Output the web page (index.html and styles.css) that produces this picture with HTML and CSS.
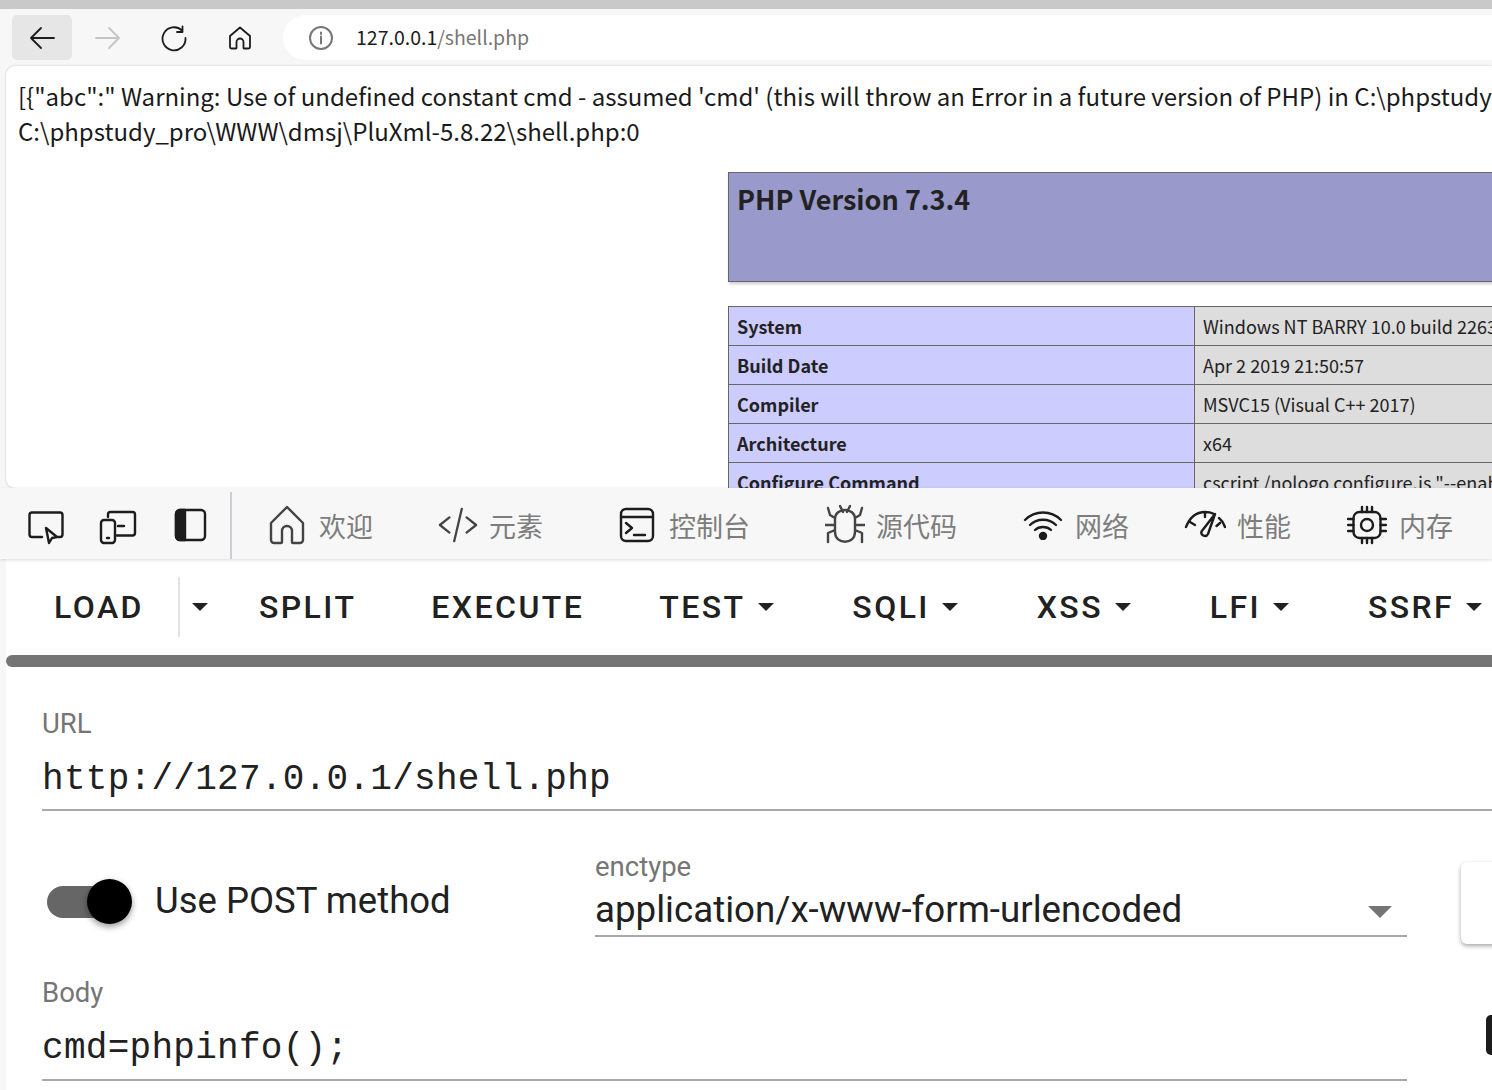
FILE: index.html
```html
<!DOCTYPE html>
<html lang="en">
<head>
    <meta charset="UTF-8">
    <meta name="viewport" content="width=device-width, initial-scale=1.0">
    <title>127.0.0.1/shell.php</title>
    <link rel="stylesheet" href="styles.css">
</head>
<body>
    <div class="window">
        <div class="top-strip"></div>

        <div class="toolbar">
            <button class="nav-button nav-active">
                <svg width="28" height="28" viewBox="0 0 28 28" class="stroke-dark"><path d="M26 14H3M13 4 3 14l10 10"/></svg>
            </button>
            <button class="nav-button">
                <svg width="28" height="28" viewBox="0 0 28 28" class="stroke-faint"><path d="M2 14h23M15 4l10 10-10 10"/></svg>
            </button>
            <button class="nav-button">
                <svg width="28" height="28" viewBox="0 0 28 28" class="stroke-dark"><path d="M22 6.500A11.500 11.500 0 1 0 25.500 14M22.500 2.500v5.500H17"/></svg>
            </button>
            <button class="nav-button">
                <svg width="28" height="28" viewBox="0 0 28 28" class="stroke-dark"><path d="M14 3.500 4 12v11a1.500 1.500 0 0 0 1.500 1.500H10a.5.5 0 0 0 .5-.5v-6a3.500 3.500 0 0 1 7 0v6a.5.5 0 0 0 .5.5h4.500A1.500 1.500 0 0 0 24 23V12z"/></svg>
            </button>
            <div class="address-bar">
                <svg width="26" height="26" viewBox="0 0 26 26" class="stroke-grey"><circle cx="13" cy="13" r="11"/><path d="M13 11.500v7M13 7.500v1.500"/></svg>
                <span class="address-text">127.0.0.1<span class="address-path">/shell.php</span></span>
            </div>
        </div>

        <div class="page">
            <div class="page-text">[{"abc":" Warning: Use of undefined constant cmd - assumed 'cmd' (this will throw an Error in a future version of PHP) in C:\phpstudy_pro\WWW\dmsj\PluXml-5.8.22\shell.php on line 1<br>
C:\phpstudy_pro\WWW\dmsj\PluXml-5.8.22\shell.php:0</div>
            <div class="php-info">
                <div class="php-title"><h1>PHP Version 7.3.4</h1></div>
                <table class="php-table">
                    <tr><td class="php-key">System</td><td class="php-value">Windows NT BARRY 10.0 build 22631 (Windows 10) AMD64</td></tr>
                    <tr><td class="php-key">Build Date</td><td class="php-value">Apr 2 2019 21:50:57</td></tr>
                    <tr><td class="php-key">Compiler</td><td class="php-value">MSVC15 (Visual C++ 2017)</td></tr>
                    <tr><td class="php-key">Architecture</td><td class="php-value">x64</td></tr>
                    <tr><td class="php-key">Configure Command</td><td class="php-value">cscript /nologo configure.js "--enable-snapshot-build"</td></tr>
                </table>
            </div>
        </div>

        <div class="dev-tabs">
            <div class="dev-tools">
                <svg width="40" height="40" viewBox="0 0 40 40" class="stroke-dark"><path d="M16 32H6a2.500 2.500 0 0 1-2.500-2.500V10A2.500 2.500 0 0 1 6 7.500h28a2.500 2.500 0 0 1 2.500 2.500v19.500A2.500 2.500 0 0 1 34 32h-2"/><path d="M20 23l11 9-5 1-3 5z"/></svg>
                <svg width="40" height="40" viewBox="0 0 40 40" class="stroke-dark"><path d="M10 12V9.500A2.500 2.500 0 0 1 12.500 7h22A2.500 2.500 0 0 1 37 9.500V28a2.500 2.500 0 0 1-2.500 2.500H19M20 21h6"/><rect x="3" y="15" width="14" height="23" rx="3"/><path d="M9 33h2"/></svg>
                <svg width="40" height="40" viewBox="0 0 40 40" class="stroke-dark panel-icon"><rect x="4" y="5" width="29" height="30" rx="4"/><path class="fill-dark" d="M4 9a4 4 0 0 1 4-4h5v30H8a4 4 0 0 1-4-4z"/></svg>
            </div>
            <div class="dev-tab dev-tab-welcome">
                <svg width="38" height="42" viewBox="0 0 38 42" class="stroke-mid"><path d="M19 3 3 19v17a3 3 0 0 0 3 3h7a1 1 0 0 0 1-1V27a5 5 0 0 1 10 0v11a1 1 0 0 0 1 1h7a3 3 0 0 0 3-3V19z"/></svg>
                <span>欢迎</span>
            </div>
            <div class="dev-tab dev-tab-elements">
                <svg width="40" height="38" viewBox="0 0 42 38" class="stroke-mid"><path d="M12 11 2 19l10 8M30 11l10 8-10 8M25 2 17 36"/></svg>
                <span>元素</span>
            </div>
            <div class="dev-tab dev-tab-console">
                <svg width="36" height="36" viewBox="0 0 36 36" class="stroke-dark"><rect x="2" y="2" width="32" height="32" rx="5"/><path d="M2 10h32M7 16l6 5-6 5M15 28h11"/></svg>
                <span>控制台</span>
            </div>
            <div class="dev-tab dev-tab-sources">
                <svg width="40" height="42" viewBox="0 0 40 42" class="stroke-mid"><path d="M15 2l3 6M25 2l-3 6M10 15c0-12 20-12 20 0v13c0 13-20 13-20 0zM3 4l2 7 5 3M37 4l-2 7-5 3M0 21h10M30 21h10M3 38v-9l7-3M37 38v-9l-7-3"/></svg>
                <span>源代码</span>
            </div>
            <div class="dev-tab dev-tab-network">
                <svg width="40" height="30" viewBox="0 0 40 30" class="stroke-dark"><path d="M2 10c10-10 26-10 36 0M7 15c7-7 19-7 26 0M12 20c4-4 12-4 16 0"/><circle class="fill-dark" cx="20" cy="26" r="3"/></svg>
                <span>网络</span>
            </div>
            <div class="dev-tab dev-tab-perf">
                <svg width="42" height="34" viewBox="0 0 42 34" class="stroke-dark"><path d="M2 19C6 9 13 4 21 4c3 0 6 .5 8 1.500M35 10c2.500 2 4.500 5 6 9M6 14l5 3M21 4v5M36 15l-3.500 3M31 6 24 26a3.500 3.500 0 0 1-6.500-2.500z"/></svg>
                <span>性能</span>
            </div>
            <div class="dev-tab dev-tab-memory">
                <svg width="40" height="40" viewBox="0 0 40 40" class="stroke-dark"><rect x="6.500" y="7" width="27" height="26" rx="6"/><circle cx="20" cy="20" r="6"/><path d="M15 2v5M20 2v5M25 2v5M15 33v5M20 33v5M25 33v5M1 14h5.500M1 20h5.500M1 26h5.500M33.500 14H39M33.500 20H39M33.500 26H39"/></svg>
                <span>内存</span>
            </div>
        </div>

        <div class="hackbar">
            <div class="menu">
                <span class="menu-item menu-load">LOAD</span>
                <span class="menu-split"><span class="caret"></span></span>
                <span class="menu-item">SPLIT</span>
                <span class="menu-item">EXECUTE</span>
                <span class="menu-item">TEST<span class="caret"></span></span>
                <span class="menu-item">SQLI<span class="caret"></span></span>
                <span class="menu-item">XSS<span class="caret"></span></span>
                <span class="menu-item">LFI<span class="caret"></span></span>
                <span class="menu-item">SSRF<span class="caret"></span></span>
            </div>
            <div class="progress"></div>
            <div class="form">
                <div class="field field-url">
                    <label class="field-label">URL</label>
                    <div class="field-value">http://127.0.0.1/shell.php</div>
                </div>
                <div class="post-row">
                    <div class="switch">
                        <div class="switch-track"></div>
                        <div class="switch-thumb"></div>
                    </div>
                    <span class="switch-label">Use POST method</span>
                    <div class="enctype">
                        <label class="field-label">enctype</label>
                        <div class="select-value">application/x-www-form-urlencoded<span class="select-arrow"></span></div>
                    </div>
                    <div class="side-card"></div>
                </div>
                <div class="body-row">
                    <div class="field field-body">
                        <label class="field-label">Body</label>
                        <div class="field-value">cmd=phpinfo();</div>
                    </div>
                    <div class="side-badge"></div>
                </div>
            </div>
        </div>
    </div>
</body>
</html>
```
FILE: styles.css
```css
body {
    margin: 0;
    background: #f7f7f7;
    font-family: "Noto Sans CJK SC", "Noto Sans", sans-serif;
}

.window {
    width: 1492px;
    height: 1090px;
    overflow: hidden;
    display: flex;
    flex-direction: column;
}

svg {
    flex: none;
    fill: none;
    stroke-width: 2;
    stroke-linecap: round;
    stroke-linejoin: round;
}

.stroke-dark { stroke: #1c1c1c; }
.stroke-mid { stroke: #444; }
.stroke-grey { stroke: #777; }
.stroke-faint { stroke: #c4c4c4; }
.fill-dark { fill: #1c1c1c; }

.top-strip {
    height: 9px;
    flex: none;
    background: #c9c9c9;
}

.toolbar {
    height: 57px;
    flex: none;
    display: flex;
    align-items: center;
    padding: 0 0 0 12px;
    box-sizing: border-box;
}

.nav-button {
    width: 60px;
    height: 45px;
    margin-right: 6px;
    border: none;
    border-radius: 5px;
    background: none;
    padding: 0;
    display: flex;
    align-items: center;
    justify-content: center;
}

.nav-button svg {
    stroke-width: 1.800;
}

.nav-active {
    background: #e6e6e6;
}

.address-bar {
    flex: 1;
    height: 45px;
    margin-left: 7px;
    padding-left: 25px;
    display: flex;
    align-items: center;
    background: #fff;
    border-radius: 23px 0 0 23px;
}

.address-text {
    margin-left: 22px;
    padding-bottom: 3px;
    font-size: 19.500px;
    color: #1c1c1c;
}

.address-path {
    color: #767676;
}

.page {
    height: 422px;
    flex: none;
    margin-left: 6px;
    background: #fff;
    border-radius: 9px 0 0 9px;
    box-shadow: 0 0 2px rgba(0, 0, 0, 0.25);
    overflow: hidden;
    position: relative;
    z-index: 1;
}

.page-text {
    padding: 12px 0 0 12px;
    font-size: 24px;
    line-height: 35px;
    color: #1a1a1a;
    white-space: nowrap;
}

.php-info {
    margin: 24px 0 0 722px;
    width: 934px;
}

.php-title {
    height: 108px;
    background: #9999cc;
    border: 1px solid #666;
    box-shadow: 1px 2px 3px #ccc;
    padding-left: 8px;
}

.php-title h1 {
    margin: 5px 0 0;
    font-size: 27px;
    line-height: 42px;
    font-weight: 700;
    color: #222;
}

.php-table {
    margin-top: 24px;
    width: 934px;
    border-collapse: collapse;
    table-layout: fixed;
    font-size: 18px;
    color: #222;
}

.php-table td {
    height: 38px;
    padding: 0 8px;
    border: 1px solid #666;
    white-space: nowrap;
    overflow: hidden;
}

.php-key {
    width: 449px;
    background: #ccccff;
    font-weight: 700;
}

.php-value {
    background: #dddddd;
}

.dev-tabs {
    height: 71px;
    flex: none;
    display: flex;
    align-items: flex-end;
    box-shadow: 0 1px 3px rgba(0, 0, 0, 0.15);
    position: relative;
    z-index: 2;
    background: #f7f7f7;
}

.dev-tools {
    width: 232px;
    height: 67px;
    flex: none;
    box-sizing: border-box;
    border-right: 2px solid #cdcdd2;
    padding: 0 0 2px 26px;
    display: flex;
    align-items: center;
    gap: 32px;
}

.dev-tools svg {
    stroke-width: 2.400;
}

.dev-tools .panel-icon {
    margin-left: 2px;
}

.dev-tab {
    position: absolute;
    top: 15px;
    display: flex;
    align-items: center;
    gap: 13px;
    font-size: 27px;
    line-height: 42px;
    color: #7d7d7d;
}

.dev-tab svg {
    stroke-width: 2.400;
}

.dev-tab span {
    padding-top: 2px;
}

.dev-tab-welcome { left: 268px; }
.dev-tab-elements { left: 438px; gap: 11px; }
.dev-tab-console { left: 619px; gap: 14px; }
.dev-tab-sources { left: 825px; gap: 11px; }
.dev-tab-network { left: 1023px; gap: 12px; }
.dev-tab-perf { left: 1184px; gap: 11px; }
.dev-tab-memory { left: 1347px; gap: 12px; }

.hackbar {
    flex: 1;
    margin-left: 6px;
    background: #fff;
    font-family: Roboto, sans-serif;
}

.menu {
    height: 96px;
    display: flex;
    align-items: center;
    padding-left: 48px;
    font-size: 32px;
    font-weight: 500;
    letter-spacing: 2.450px;
    color: #212121;
    white-space: nowrap;
}

.menu-item {
    display: flex;
    align-items: center;
    margin-right: 75px;
}

.menu-load {
    margin-right: 34px;
}

.menu-split {
    height: 60px;
    margin-right: 51px;
    padding-left: 12px;
    border-left: 2px solid #e2e2e2;
    display: flex;
    align-items: center;
}

.caret {
    width: 0;
    height: 0;
    margin: 0 3.600px 0 12.200px;
    border-top: 8px solid #212121;
    border-left: 8px solid transparent;
    border-right: 8px solid transparent;
}

.menu-split .caret {
    margin: 0;
}

.progress {
    height: 12px;
    background: #757575;
    border-radius: 6px 0 0 6px;
}

.form {
    padding: 0 0 0 36px;
}

.field-label {
    display: block;
    font-size: 27.500px;
    line-height: 32px;
    color: #757575;
}

.field .field-label {
    margin-bottom: 15px;
}

.field-value {
    font-family: "Liberation Mono", monospace;
    font-size: 36px;
    line-height: 50px;
    letter-spacing: 0.280px;
    color: #212121;
    border-bottom: 2px solid #a9a9a9;
    padding-bottom: 4px;
}

.field-url {
    padding-top: 41px;
}

.field-body .field-value {
    padding-bottom: 5px;
}

.post-row {
    display: flex;
    align-items: flex-start;
    margin-top: 40px;
}

.switch {
    position: relative;
    width: 90px;
    height: 46px;
    margin: 28px 19px 0 4px;
    flex: none;
}

.switch-track {
    position: absolute;
    left: 1px;
    top: 7px;
    width: 76px;
    height: 32px;
    border-radius: 16px;
    background: #666;
}

.switch-thumb {
    position: absolute;
    left: 41px;
    top: 0;
    width: 45px;
    height: 45px;
    border-radius: 50%;
    background: #000;
    box-shadow: 0 3px 6px rgba(0, 0, 0, 0.4);
}

.switch-label {
    width: 440px;
    flex: none;
    margin-top: 27px;
    font-size: 36.500px;
    line-height: 46px;
    color: #212121;
}

.enctype {
    width: 812px;
    flex: none;
}

.select-value {
    position: relative;
    margin-top: 4px;
    font-size: 36.700px;
    line-height: 46px;
    color: #212121;
    border-bottom: 2px solid #a9a9a9;
    padding-bottom: 2px;
}

.select-arrow {
    position: absolute;
    right: 15px;
    top: 19px;
    width: 0;
    height: 0;
    border-top: 12px solid #757575;
    border-left: 12px solid transparent;
    border-right: 12px solid transparent;
}

.side-card {
    width: 60px;
    height: 82px;
    margin: 11px 0 0 54px;
    flex: none;
    background: #fff;
    border-radius: 6px 0 0 6px;
    box-shadow: 0 2px 4px rgba(0, 0, 0, 0.35);
}

.body-row {
    display: flex;
    align-items: flex-start;
    margin-top: 33px;
}

.field-body {
    width: 1365px;
    flex: none;
}

.side-badge {
    width: 12px;
    height: 40px;
    margin: 38px 0 0 79px;
    flex: none;
    background: #1c1c1c;
    border-radius: 5px 0 0 5px;
}
```
